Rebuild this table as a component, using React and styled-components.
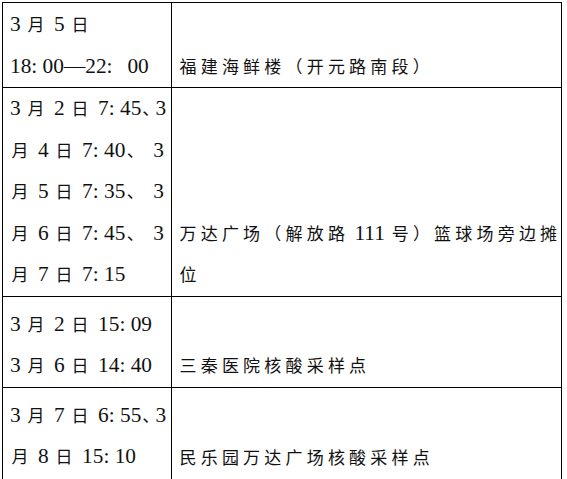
import * as React from "react";
import styled, { createGlobalStyle } from "styled-components";

const GlobalStyle = createGlobalStyle`
  html, body {
    margin: 0;
    padding: 0;
    background: #fff;
  }
`;

const Page = styled.div`
  padding: 2px 0 0 2px;
`;

const Table = styled.table`
  width: 560px;
  border-collapse: collapse;
  table-layout: fixed;
  font-family: "Liberation Serif", "Noto Sans CJK SC", serif;
  font-size: 21.33px;
  line-height: 41.5px;
  color: #111;
`;

const Cell = styled.td`
  border: 1.5px solid #000;
  height: ${props => props.$height}px;
  box-sizing: border-box;
  padding: ${props => props.$top}px 0 0 ${props => props.$left}px;
  vertical-align: ${props => props.$align};
  white-space: pre;
`;

// Han characters: smaller glyph, same 16pt advance as the document
const Han = styled.span`
  font-family: "Noto Sans CJK SC", sans-serif;
  font-size: 17px;
  line-height: 1;
  letter-spacing: 4.2px;
  padding-left: 1.5px;
`;

const splitHan = text =>
  text.split(/([\u3000-\u9fff\uff00-\uffef]+)/).map((part, i) =>
    /[\u3000-\u9fff\uff00-\uffef]/.test(part) ? <Han key={i}>{part}</Han> : part
  );

const rows = [
  {
    time: "3 月 5 日\n18: 00\u201422:  \u200900",
    place: "福建海鲜楼（开元路南段）",
    top: 1,
    height: 84
  },
  {
    time: "3 月 2 日 7: 45､3\n月 4 日 7: 40、 3\n月 5 日 7: 35、 3\n月 6 日 7: 45、 3\n月 7 日 7: 15",
    place: "万达广场（解放路 111 号）篮球场旁边摊\n位",
    top: 0,
    height: 208
  },
  {
    time: "3 月 2 日 15: 09\n3 月 6 日 14: 40",
    place: "三秦医院核酸采样点",
    top: 7,
    height: 91
  },
  {
    time: "3 月 7 日 6: 55､3\n月 8 日 15: 10",
    place: "民乐园万达广场核酸采样点",
    top: 7,
    height: 92
  }
];

const App = () => {
  return (
    <Page>
      <GlobalStyle />
      <Table>
        <colgroup>
          <col style={{ width: 169 }} />
          <col />
        </colgroup>
        <tbody>
          {rows.map((row, i) => (
            <tr key={i}>
              <Cell $top={row.top} $height={row.height} $left={7} $align="top">
                {splitHan(row.time)}
              </Cell>
              <Cell $top={row.top} $height={row.height} $left={6} $align="bottom">
                {splitHan(row.place)}
              </Cell>
            </tr>
          ))}
        </tbody>
      </Table>
    </Page>
  );
};

export default App;
